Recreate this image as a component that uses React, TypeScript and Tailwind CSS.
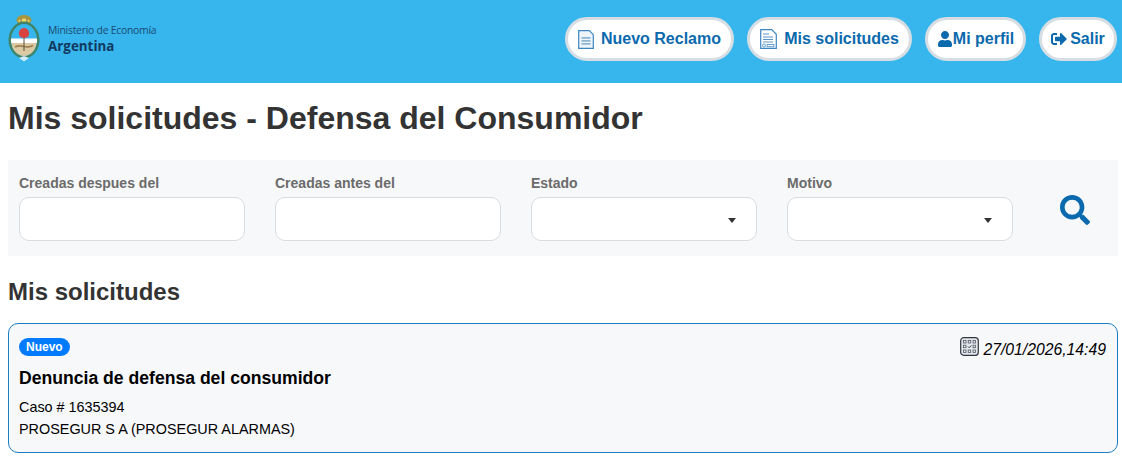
import type { ReactNode } from "react";
import { FaSearch, FaSignOutAlt, FaUser } from "react-icons/fa";

const font = { fontFamily: '"Liberation Sans", Arial, sans-serif' };

function Emblem() {
  return (
    <svg width="33" height="48" viewBox="0 0 33 48" className="-mt-[2px] shrink-0">
      <ellipse cx="16" cy="6" rx="7.500" ry="5" fill="#a8963f" />
      <ellipse cx="16" cy="7" rx="5.500" ry="2.500" fill="#eed56c" />
      <path d="M13 4.500v5M19 4.500v5" stroke="#6d6a30" strokeWidth="1" />
      <ellipse cx="16" cy="26" rx="15.500" ry="18.500" fill="#3f8468" />
      <ellipse cx="16" cy="26" rx="13" ry="16" fill="#37b6ed" />
      <path d="M3.100 24.500h25.800c.4 1 .1 3-.2 4.500H3.300c-.3-1.500-.6-3.500-.2-4.500z" fill="#fff" />
      <path d="M3.300 29h25.400c-1.400 8-6.700 13-12.700 13S4.700 37 3.300 29z" fill="#dcc9a2" />
      <path d="M7 33c3-1.500 5-1.500 9-.5s6 .5 9-1" stroke="#9b8154" strokeWidth="1.800" fill="none" />
      <path d="M16 23v14" stroke="#5f4f36" strokeWidth="1" />
      <path d="M16 14c3.500 0 5.500 3 5 6.500-.3 2.200-2.300 3.500-5 3.500s-4.700-1.300-5-3.500c-.5-3.500 1.500-6.500 5-6.500z" fill="#d8423f" />
      <path d="M11 44l5-2 5 2-5 3.500z" fill="#cfeaf8" />
    </svg>
  );
}

function NewClaimIcon() {
  return (
    <svg width="16" height="19" viewBox="0 0 16 19" className="shrink-0">
      <path d="M.7.7h10.600l4 4v13.600H.7z" fill="#eef4fa" stroke="#3d86c2" strokeWidth="1.200" />
      <path d="M3.500 7h9v1.800h-9zM3.500 10h9v1.800h-9zM3.500 13h9v1.800h-9z" fill="#8db4d6" />
    </svg>
  );
}

function ListIcon() {
  return (
    <svg width="17" height="20" viewBox="0 0 17 20" className="shrink-0">
      <path d="M.7.7h11l4.600 4.600v14H.7z" fill="#fff" stroke="#3d86c2" strokeWidth="1.200" />
      <path d="M3 5h6M3 8h10M3 10.500h10M3 13h10" stroke="#5a97c8" strokeWidth="1" />
      <circle cx="4" cy="16.500" r="1.500" fill="none" stroke="#3d86c2" strokeWidth=".8" />
      <path d="M7 15.500h7v2.200H7z" fill="none" stroke="#3d86c2" strokeWidth=".8" />
    </svg>
  );
}

function CalendarIcon() {
  return (
    <svg width="19" height="19" viewBox="0 0 19 19" className="-mt-[6px] shrink-0">
      <rect x=".7" y=".7" width="17.600" height="17.600" rx="3" fill="#e4e7ec" stroke="#33363f" strokeWidth="1.200" />
      <g fill="none" stroke="#555a66" strokeWidth=".8">
        <rect x="3.500" y="3.500" width="2.500" height="2.500" />
        <rect x="8.200" y="3.500" width="2.500" height="2.500" />
        <rect x="13" y="3.500" width="2.500" height="2.500" />
        <rect x="3.500" y="8.200" width="2.500" height="2.500" />
        <rect x="13" y="8.200" width="2.500" height="2.500" />
        <rect x="3.500" y="13" width="2.500" height="2.500" />
        <rect x="8.200" y="13" width="2.500" height="2.500" />
        <rect x="13" y="13" width="2.500" height="2.500" />
      </g>
      <path d="M8 9.500l1.200 1.200 2-2.200" stroke="#33363f" strokeWidth="1" fill="none" />
    </svg>
  );
}

function NavButton({ icon, label, gap }: { icon: ReactNode; label: string; gap: string }) {
  return (
    <button className={`flex h-11 items-center justify-center rounded-full border-[3px] border-[#d6dde3] bg-white text-base font-bold whitespace-nowrap text-[#0b69ad] ${gap}`}>
      {icon}
      {label}
    </button>
  );
}

function Field({ label, select }: { label: string; select?: boolean }) {
  return (
    <div className="flex w-[226px] flex-col">
      <label className="mb-[3px] h-[21px] text-sm leading-[21px] font-bold text-[#6b6b6b]">{label}</label>
      <div className="flex h-11 items-center justify-end rounded-[10px] border border-[#dadce0] bg-white pr-[20px]">
        {select && <span className="mt-[3px] h-0 w-0 border-x-[4px] border-t-[5px] border-x-transparent border-t-[#333]" />}
      </div>
    </div>
  );
}

export default function App() {
  return (
    <div className="min-h-[457px] overflow-hidden bg-white text-[#333]" style={font}>
      <header className="flex h-[83px] items-center justify-between bg-[#37b6ed] pr-[5px] pb-[5px] pl-[8px]">
        <div className="flex items-center gap-[7px]" style={{ fontFamily: '"Open Sans", sans-serif' }}>
          <Emblem />
          <div className="text-[#12395f]">
            <p className="text-[10.400px] leading-[13px] font-medium tracking-[-0.25px] text-[#1a4a73]">Ministerio de Economía</p>
            <p className="text-[13.400px] leading-[18px] font-bold">Argentina</p>
          </div>
        </div>
        <nav className="flex gap-[13px]">
          <NavButton icon={<NewClaimIcon />} label="Nuevo Reclamo" gap="w-[169px] gap-[7px]" />
          <NavButton icon={<ListIcon />} label="Mis solicitudes" gap="w-[165px] gap-[7px]" />
          <NavButton icon={<FaUser size={16} />} label="Mi perfil" gap="w-[101px]" />
          <NavButton icon={<FaSignOutAlt size={16} />} label="Salir" gap="w-[78px] gap-[3px]" />
        </nav>
      </header>

      <main className="pr-[4px] pl-[8px]">
        <h1 className="mt-[16px] mb-[23px] h-[38px] text-[32px] leading-[38px] font-bold">Mis solicitudes - Defensa del Consumidor</h1>

        <section className="flex h-[96px] items-start bg-[#f7f8fa] pt-[13px] pl-[11px]">
          <div className="flex gap-[30px]">
            <Field label="Creadas despues del" />
            <Field label="Creadas antes del" />
            <Field label="Estado" select />
            <Field label="Motivo" select />
          </div>
          <FaSearch size={30} className="mt-[22px] ml-[47px] text-[#0b69ad]" />
        </section>

        <h2 className="mt-[21px] mb-[17px] h-[29px] text-2xl leading-[29px] font-bold">Mis solicitudes</h2>

        <article className="h-[130px] rounded-[10px] border border-[#1b7cc0] bg-[#f7f8fa] pt-[14px] pr-[11px] pl-[10px] text-black">
          <div className="flex items-start justify-between">
            <span className="rounded-full bg-[#007bff] px-[7px] text-xs leading-[18px] font-bold text-white">Nuevo</span>
            <span className="flex items-center gap-[4px] text-[15.750px] italic">
              <CalendarIcon />
              27/01/2026,14:49
            </span>
          </div>
          <h3 className="mt-[5px] text-[17.600px] leading-[22px] font-bold">Denuncia de defensa del consumidor</h3>
          <p className="mt-[8px] text-[14.400px] leading-[21px]">Caso # 1635394</p>
          <p className="mt-px text-[14.400px] leading-[21px]">PROSEGUR S A (PROSEGUR ALARMAS)</p>
        </article>
      </main>
    </div>
  );
}
